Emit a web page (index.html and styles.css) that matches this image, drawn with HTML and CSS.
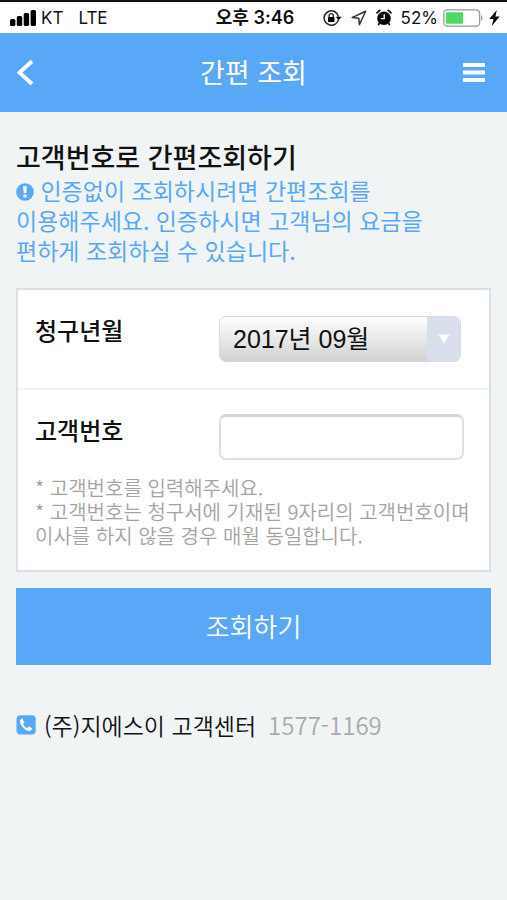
FILE: index.html
```html
<!DOCTYPE html>
<html lang="ko">
<head>
<meta charset="utf-8">
<meta name="viewport" content="width=device-width, initial-scale=1">
<title>간편 조회</title>
<link rel="stylesheet" href="styles.css">
</head>
<body>
<div class="status">
  <div class="status-side">
    <svg class="signal" width="26" height="16" viewBox="0 0 26 16" aria-hidden="true"><rect x="0" y="9" width="5.4" height="7" rx="1.5"/><rect x="6.8" y="6" width="5.4" height="10" rx="1.5"/><rect x="13.7" y="3" width="5.4" height="13" rx="1.5"/><rect x="20.6" y="0" width="5.4" height="16" rx="1.5"/></svg>
    <span class="carrier">KT</span>
    <span class="carrier">LTE</span>
  </div>
  <div class="clock">오후 3:46</div>
  <div class="status-side status-right">
    <svg width="19" height="18" viewBox="0 0 19 18" aria-hidden="true"><path d="M12.6 14.8A7.2 7.2 0 1 1 15.4 7.6" fill="none" stroke="#222" stroke-width="1.5"/><path d="M12.8 7.8h5.8l-2.9 3.4z"/><path d="M15.4 10.6a7 7 0 0 1-2.8 4.2" fill="none" stroke="#222" stroke-width="1.5"/><rect x="5" y="8" width="6.4" height="5" rx=".6"/><path d="M6.2 8.4V6.6a2 2 0 0 1 4 0v1.8" fill="none" stroke="#222" stroke-width="1.4"/></svg>
    <svg width="16" height="16" viewBox="0 0 16 16" aria-hidden="true"><path d="M1.2 7.6 14.6 1.2 8.4 14.8 7.8 8.2z" fill="none" stroke="#333" stroke-width="1.5" stroke-linejoin="round"/></svg>
    <svg width="16" height="17" viewBox="0 0 16 17" aria-hidden="true"><circle cx="8" cy="9.2" r="6.8"/><path d="M1 3.8 3.6 1.4M15 3.8 12.4 1.4M3.6 14l-1 1.6M12.4 14l1 1.6" stroke="#111" stroke-width="1.8" stroke-linecap="round"/><path d="M8.2 5.2v4.4H4.8" fill="none" stroke="#fff" stroke-width="1.3"/></svg>
    <span class="percent">52%</span>
    <svg width="41" height="18" viewBox="0 0 41 18" aria-hidden="true"><rect x=".8" y=".8" width="35.8" height="16.4" rx="3.5" fill="#fff" stroke="#999" stroke-width="1.3"/><rect x="3" y="3.2" width="17" height="11.6" rx="1" fill="#4cd964"/><path d="M38 6q3 3 0 6z" fill="#999"/></svg>
    <svg width="11" height="16" viewBox="0 0 11 16" aria-hidden="true"><path d="M7.8 0 .3 9h4.2L2.8 16l7.9-9.4H6.4z"/></svg>
  </div>
</div>
<header class="header">
  <button class="icon-button" type="button" aria-label="뒤로"><svg width="18" height="28" viewBox="0 0 18 28"><path d="M16 2.2 3.6 13.6 16 25" fill="none" stroke="#fff" stroke-width="4"/></svg></button>
  <h1>간편 조회</h1>
  <button class="icon-button menu" type="button" aria-label="메뉴"><svg width="22" height="20" viewBox="0 0 22 20"><path d="M0 2h22M0 9.5h22M0 17h22" stroke="#fff" stroke-width="4"/></svg></button>
</header>
<main>
  <h2>고객번호로 간편조회하기</h2>
  <p class="notice"><svg width="18" height="18" viewBox="0 0 18 18" aria-hidden="true"><circle cx="9" cy="9" r="8.8" fill="#59a8f7"/><path d="M7.1 3h3.8l-.6 7H7.7z" fill="#fff"/><rect x="7.4" y="11.4" width="3.2" height="3.2" rx=".5" fill="#fff"/></svg> 인증없이 조회하시려면 간편조회를<br>이용해주세요. 인증하시면 고객님의 요금을<br>편하게 조회하실 수 있습니다.</p>
  <form>
    <div class="panel">
      <div class="row month">
        <label for="month">청구년월</label>
        <div class="select-box">
          <select id="month"><option>2017년 09월</option></select>
          <span class="select-arrow"><svg width="12" height="10" viewBox="0 0 12 10" aria-hidden="true"><path d="M.5.5h11L6 9.5z" fill="#fff"/></svg></span>
        </div>
      </div>
      <div class="row number">
        <label for="number">고객번호</label>
        <input id="number" type="text" inputmode="numeric">
      </div>
      <p class="help">* 고객번호를 입력해주세요.<br>* 고객번호는 청구서에 기재된 9자리의 고객번호이며<br>이사를 하지 않을 경우 매월 동일합니다.</p>
    </div>
    <button class="submit" type="submit">조회하기</button>
  </form>
  <div class="contact">
    <svg width="20" height="20" viewBox="0 0 20 20" aria-hidden="true"><rect x=".5" y=".3" width="19.2" height="19.2" rx="3.8" fill="#59a8f7"/><path d="M6.2 3.6 4.3 4.8C2.8 7.6 6.8 14.8 12.6 16c1.6.2 3.2-.6 3.6-2.7l-3.3-1.8-1.7 1.7c-2-.9-3.4-2.3-4.2-4.2l1.5-1.6z" fill="#fff"/></svg>
    <span>(주)지에스이 고객센터</span>
    <a href="tel:1577-1169">1577-1169</a>
  </div>
</main>
</body>
</html>
```
FILE: styles.css
```css
* { box-sizing: border-box; }
body {
  margin: 0;
  min-height: 100vh;
  background: #f1f4f4;
  color: #111;
  font-family: "Noto Sans CJK KR", sans-serif;
}
h1, h2, p { margin: 0; font-weight: 400; }
button { border: 0; padding: 0; font-family: inherit; }
svg { flex: none; }
.status {
  display: grid;
  grid-template-columns: 1fr auto 1fr;
  align-items: center;
  height: 33px;
  padding: 0 7px 0 10px;
  border-top: 2px solid #111;
  background: #fff;
  font: 18px/28px Inter, "Noto Sans CJK KR", sans-serif;
}
.status-side { display: flex; align-items: center; }
.carrier { margin: 0 10px 0 5px; font-size: 17px; }
.clock { font-weight: 600; }
.status-right { justify-content: flex-end; gap: 9px; }
.status-right .percent { margin-right: -4px; font-size: 17px; }
.status-right svg:last-child { margin-left: -4px; }
.header {
  display: flex;
  align-items: center;
  justify-content: space-between;
  height: 79px;
  padding: 0 16px;
  background: #59a8f7;
  color: #fff;
}
.header h1 { padding-bottom: 2px; font-size: 27px; line-height: 40px; }
.icon-button {
  display: flex;
  align-items: center;
  width: 44px;
  height: 44px;
  background: none;
}
.icon-button.menu { justify-content: flex-end; padding: 0 6px 0 0; }
main { padding: 27px 16px; }
h2 { font-size: 27px; line-height: 36px; font-weight: 500; }
.notice { color: #59a8f7; font-size: 23px; line-height: 30px; }
.notice svg { vertical-align: -1px; }
.panel {
  margin-top: 23px;
  border: 2px solid #dcdfe8;
  background: #fff;
}
.row {
  display: grid;
  grid-template-columns: 184px 1fr;
  align-items: start;
  padding: 24px 25px 0 17px;
}
.row.month {
  padding: 26px 28px 26px 17px;
  border-bottom: 2px solid #f1f4f4;
}
label { font-size: 24px; line-height: 28px; font-weight: 500; }
.row.number label { line-height: 32px; }
.select-box {
  display: flex;
  height: 46px;
  overflow: hidden;
  border: 1px solid #d5d9e6;
  border-radius: 7px;
  background: linear-gradient(#fff, #d2d2d2);
}
select {
  flex: 1;
  min-width: 0;
  padding: 0 0 0 13px;
  appearance: none;
  border: 0;
  background: none;
  color: #111;
  font: 25px "Liberation Sans", "Noto Sans CJK KR", sans-serif;
}
.select-arrow {
  display: flex;
  align-items: center;
  justify-content: center;
  width: 33px;
  background: #d8deeb;
}
input {
  width: 100%;
  height: 46px;
  padding: 0 12px;
  border: 2px solid #dcdfe8;
  border-top: 3px solid #d3d5de;
  border-radius: 7px;
  background: #fff;
  font: 24px "Liberation Sans", "Noto Sans CJK KR", sans-serif;
}
.help {
  padding: 16px 0 22px 17px;
  color: #a3a3a3;
  font-size: 20px;
  line-height: 24px;
  font-weight: 350;
  white-space: nowrap;
}
.submit {
  display: block;
  width: 100%;
  height: 77px;
  margin-top: 16px;
  padding-bottom: 2px;
  background: #59a8f7;
  color: #fff;
  font-size: 26px;
  font-weight: 350;
}
.contact {
  display: flex;
  align-items: center;
  gap: 8px;
  margin-top: 42px;
  font-size: 23px;
  line-height: 36px;
  font-weight: 350;
}
.contact a {
  margin-left: 4px;
  color: #aaa;
  font-size: 24px;
  text-decoration: none;
}
```
